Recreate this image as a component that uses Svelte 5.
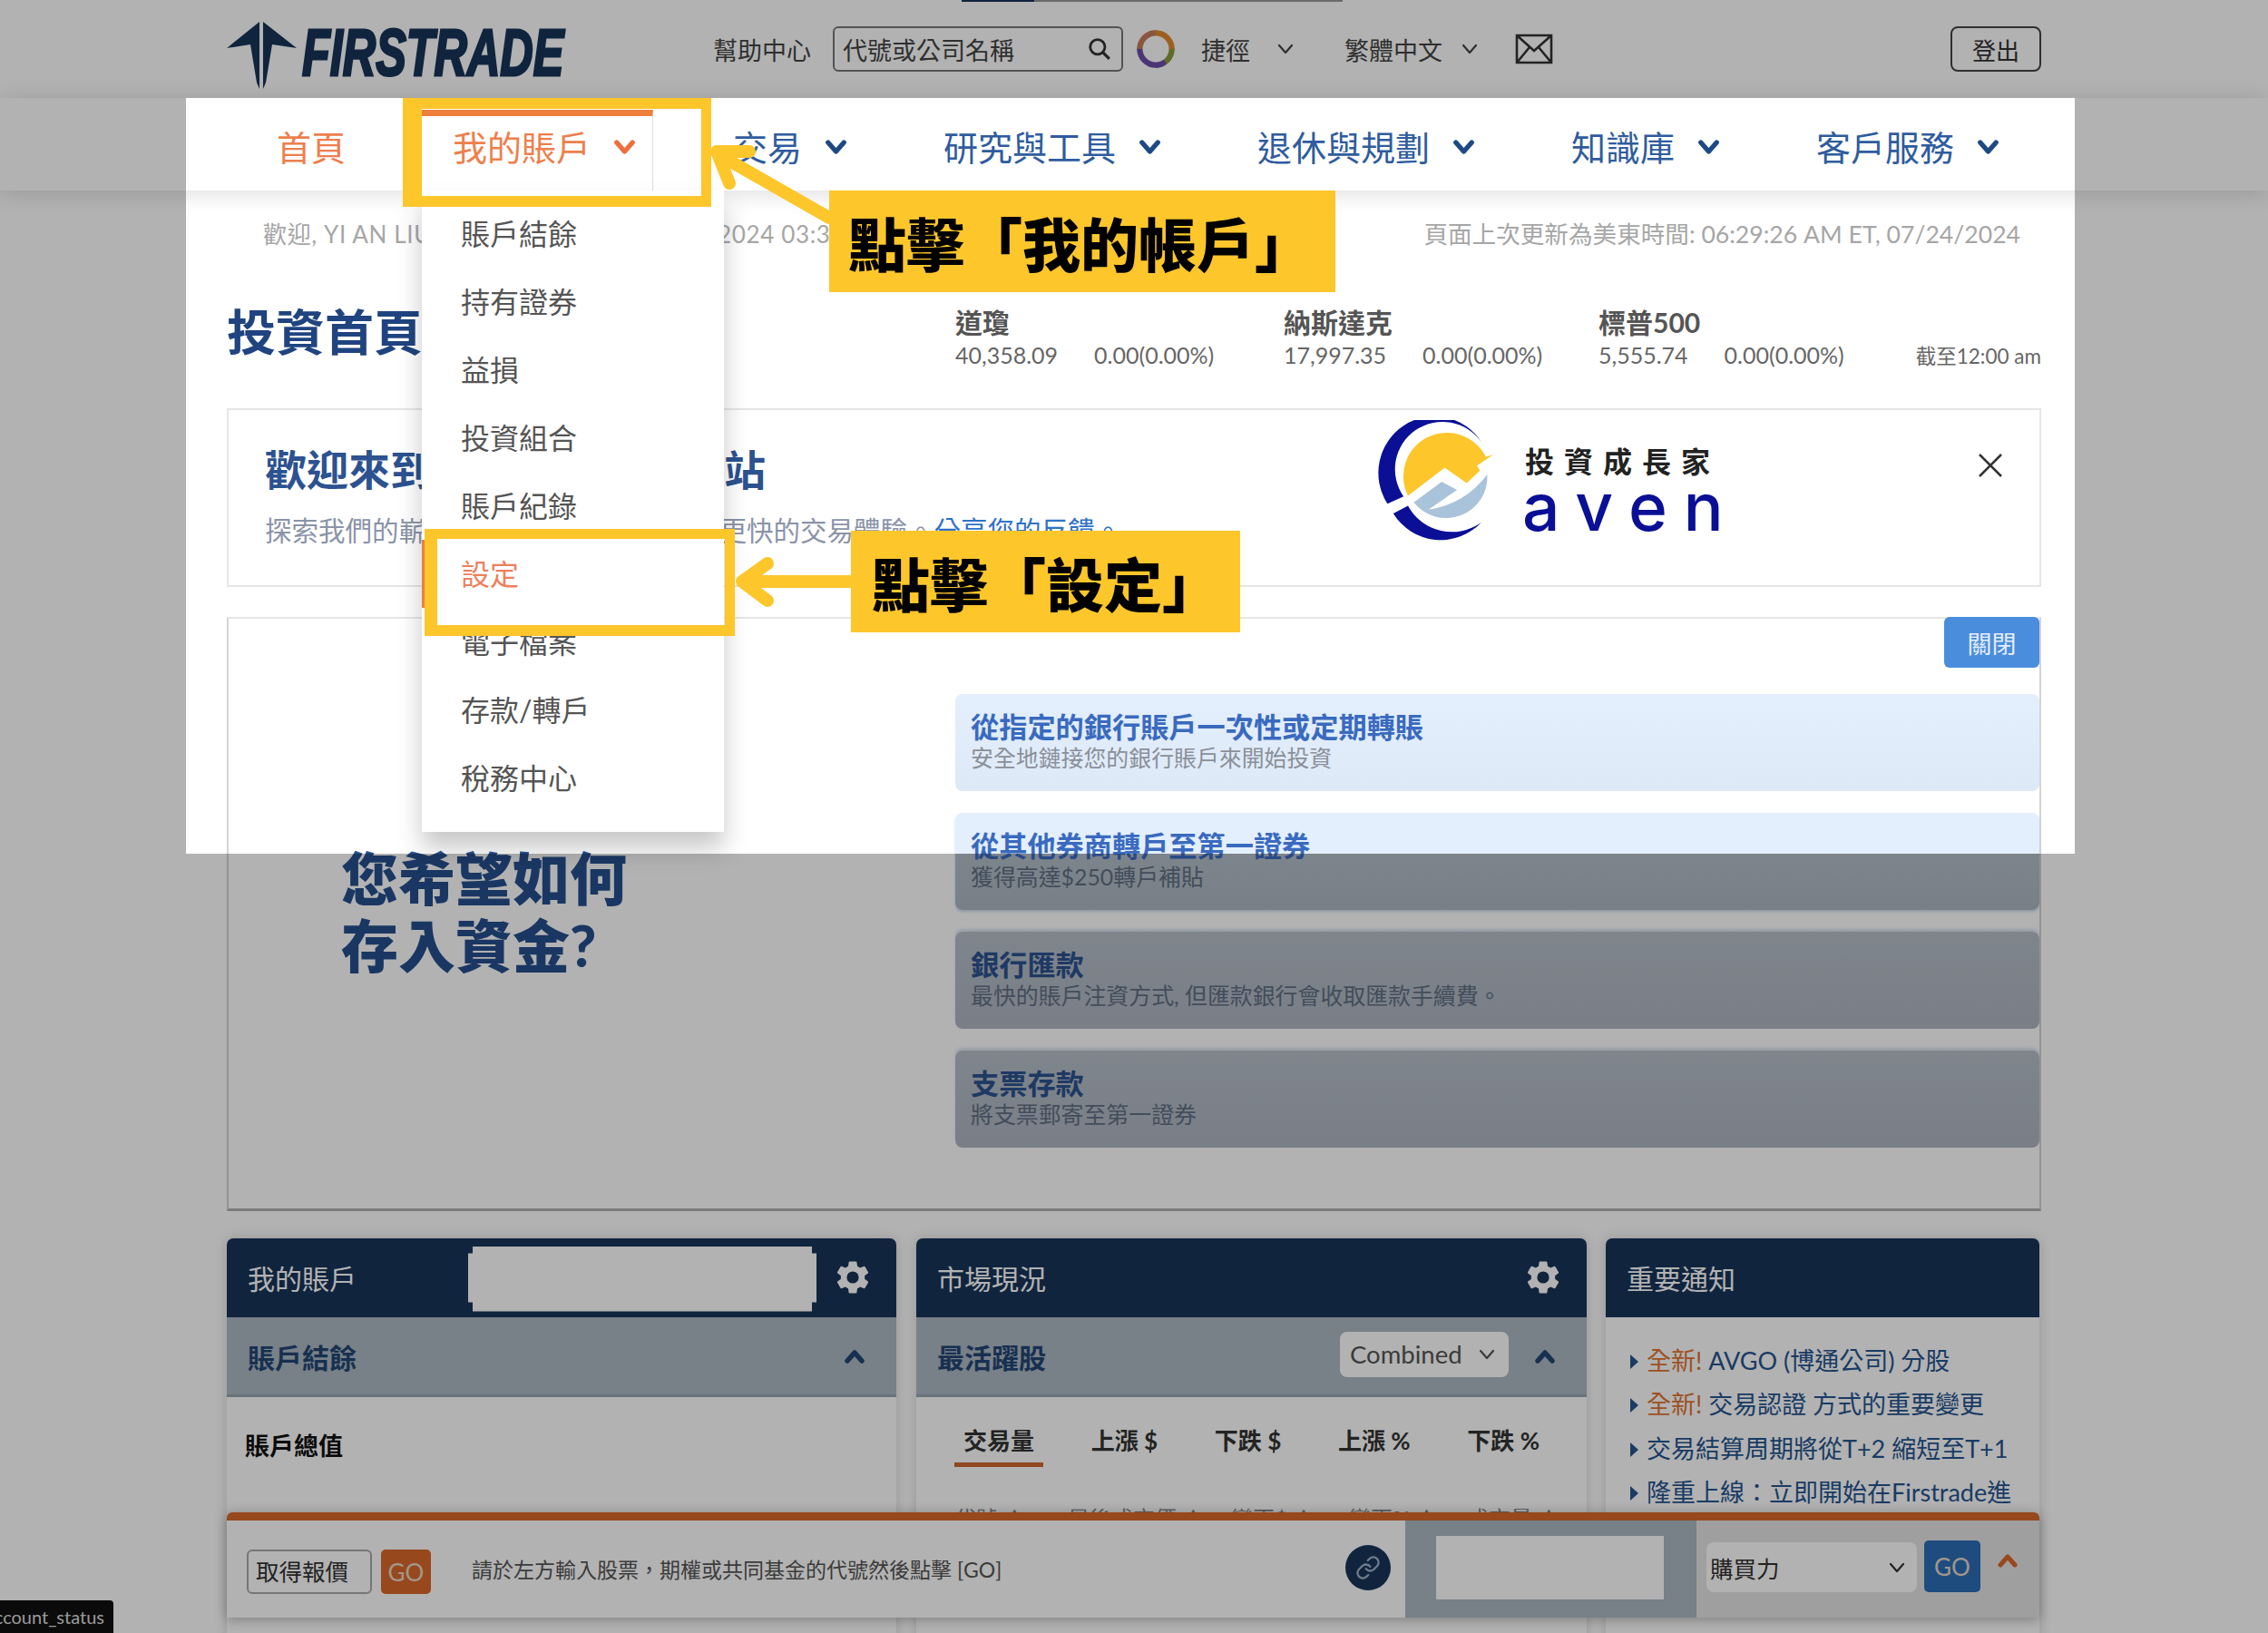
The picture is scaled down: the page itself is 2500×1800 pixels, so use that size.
<script>
  const navItems = [
    { label: '交易', gap: 88 },
    { label: '研究與工具', gap: 106 },
    { label: '退休與規劃', gap: 106 },
    { label: '知識庫', gap: 106 },
    { label: '客戶服務', gap: 106 }
  ];
  const menu = ['賬戶結餘', '持有證券', '益損', '投資組合', '賬戶紀錄', '設定', '電子檔案', '存款/轉戶', '稅務中心'];
  const indexes = [
    { name: '道瓊', value: '40,358.09', change: '0.00(0.00%)', width: 362 },
    { name: '納斯達克', value: '17,997.35', change: '0.00(0.00%)', width: 347 },
    { name: '標普500', value: '5,555.74', change: '0.00(0.00%)', width: 346 }
  ];
  const funding = [
    { title: '從指定的銀行賬戶一次性或定期轉賬', note: '安全地鏈接您的銀行賬戶來開始投資', cls: 'lit' },
    { title: '從其他券商轉戶至第一證券', note: '獲得高達$250轉戶補貼', cls: 'split' },
    { title: '銀行匯款', note: '最快的賬戶注資方式, 但匯款銀行會收取匯款手續費。', cls: 'dim' },
    { title: '支票存款', note: '將支票郵寄至第一證券', cls: 'dim' }
  ];
  const tabs = ['交易量', '上漲 $', '下跌 $', '上漲 %', '下跌 %'];
  const columns = [['代號', 125], ['最後成交價', 180], ['變更$', 130], ['變更%', 130], ['成交量', 100]];
  const notices = [
    { hot: '全新! ', text: 'AVGO (博通公司) 分股' },
    { hot: '全新! ', text: '交易認證 方式的重要變更' },
    { hot: '', text: '交易結算周期將從T+2 縮短至T+1' },
    { hot: '', text: '隆重上線：立即開始在Firstrade進' }
  ];
  const gear =
    'M19.14 12.94c.04-.3.06-.61.06-.94 0-.32-.02-.64-.07-.94l2.03-1.58a.49.49 0 0 0 .12-.61l-1.92-3.32a.488.488 0 0 0-.59-.22l-2.39.96c-.5-.38-1.03-.7-1.62-.94l-.36-2.54a.484.484 0 0 0-.48-.41h-3.84c-.24 0-.43.17-.47.41l-.36 2.54c-.59.24-1.13.57-1.62.94l-2.39-.96c-.22-.08-.47 0-.59.22L2.74 8.87c-.12.21-.08.47.12.61l2.03 1.58c-.05.3-.09.63-.09.94s.02.64.07.94l-2.03 1.58a.49.49 0 0 0-.12.61l1.92 3.32c.12.22.37.29.59.22l2.39-.96c.5.38 1.03.7 1.62.94l.36 2.54c.05.24.24.41.48.41h3.84c.24 0 .44-.17.47-.41l.36-2.54c.59-.24 1.13-.56 1.62-.94l2.39.96c.22.08.47 0 .59-.22l1.92-3.32c.12-.22.07-.47-.12-.61l-2.01-1.58zM12 15.6A3.6 3.6 0 1 1 12 8.4a3.6 3.6 0 0 1 0 7.2z';
</script>

{#snippet chevron(cls)}
  <svg class={cls} viewBox="0 0 20 14"><path d="M3 3l7 8 7-8" fill="none" stroke="currentColor" stroke-linecap="round" stroke-linejoin="round" /></svg>
{/snippet}

{#snippet caretUp()}
  <svg class="caret-up" viewBox="0 0 24 16"><path d="M4 13l8-9 8 9" fill="none" stroke="currentColor" stroke-width="5.5" stroke-linecap="round" stroke-linejoin="round" /></svg>
{/snippet}

{#snippet cog()}
  <svg class="cog" viewBox="0 0 24 24"><path d={gear} fill="#fff" fill-rule="evenodd" /></svg>
{/snippet}

<div class="page">
  <div class="tabstrip"></div>

  <header class="top">
    <div class="wrap top-row">
      <svg class="arrow-mark" viewBox="250 22 80 80">
        <path d="M286 25 L250 54 L276 50 L283 92 L286 99Z M290 25 L327 54 L300 50 L293 92 L290 99Z" fill="#17345a" />
      </svg>
      <div class="wordmark"><span>FIRSTRADE</span></div>
      <span class="help">幫助中心</span>
      <div class="search">
        <span>代號或公司名稱</span>
        <svg viewBox="0 0 24 24"><circle cx="10" cy="10" r="7.5" fill="none" stroke="#333" stroke-width="2.6" /><path d="M15.5 15.5L22 22" stroke="#333" stroke-width="3" /></svg>
      </div>
      <div class="ring"></div>
      <span class="quick">捷徑</span>
      {@render chevron('thin quick-chev')}
      <span class="lang">繁體中文</span>
      {@render chevron('thin lang-chev')}
      <svg class="mail" viewBox="0 0 42 34"><path d="M2 2h38v30H2zM2 2l19 17L40 2M2 32l14-17M40 32L26 15" fill="none" stroke="#333" stroke-width="2.6" /></svg>
      <button class="logout">登出</button>
    </div>
  </header>

  <nav class="nav">
    <div class="wrap nav-row">
      <a class="item home">首頁</a>
      <a class="item active">我的賬戶{@render chevron('bold')}</a>
      {#each navItems as n}
        <a class="item" style="margin-left:{n.gap}px">{n.label}{@render chevron('bold')}</a>
      {/each}
    </div>
  </nav>

  <main class="wrap">
    <div class="subbar">
      <span class="login">歡迎, YI AN LIU 您的上次登入時間 07/24/2024 03:30 AM</span>
      <span class="updated">頁面上次更新為美東時間: 06:29:26 AM ET, 07/24/2024</span>
    </div>

    <section class="summary">
      <h1>投資首頁</h1>
      {#each indexes as i}
        <div class="index" style="width:{i.width}px">
          <b>{i.name}</b>
          <div class="vals"><span>{i.value}</span><span>{i.change}</span></div>
        </div>
      {/each}
      <span class="asof">截至12:00 am</span>
    </section>

    <section class="welcome">
      <div class="welcome-text">
        <h2>歡迎來到第一證券全新網站</h2>
        <p>探索我們的嶄新網站設計與功能，享受更快的交易體驗。<a>分享您的反饋。</a></p>
      </div>
      <div class="brand">
        <svg viewBox="100 60 420 420">
          <path d="M455 135A190 192 0 0 0 135 345L190 320A158 158 0 0 1 455 135Z" fill="#0a0f96" />
          <path d="M155 378A190 192 0 0 0 455 408A170 170 0 0 1 205 352Z" fill="#0a0f96" />
          <path d="M205 318A135 135 0 0 1 470 185L495 178L440 215L450 232L405 275L330 222Z" fill="#fdc62b" />
          <path d="M225 340L320 270L372 298L275 365Q400 345 475 245A140 140 0 0 1 225 340Z" fill="#a9c3db" />
        </svg>
        <div class="brand-text">
          <b>投資成長家</b>
          <span>aven</span>
        </div>
      </div>
      <svg class="dismiss" viewBox="0 0 26 26"><path d="M1 1l24 24M25 1L1 25" stroke="#333" stroke-width="2.6" /></svg>
    </section>

    <section class="deposit">
      <div class="deposit-left">
        <h2>您希望如何<br />存入資金?</h2>
      </div>
      <div class="deposit-right">
        <button class="close">關閉</button>
        <div class="rows">
          {#each funding as f}
            <div class="row {f.cls}">
              <b>{f.title}</b>
              <span>{f.note}</span>
            </div>
          {/each}
        </div>
      </div>
    </section>

    <section class="panels">
      <div class="panel first">
        <div class="panel-head">
          <span>我的賬戶</span>
          <div class="redacted"></div>
          {@render cog()}
        </div>
        <div class="panel-sub">
          <b>賬戶結餘</b>
          {@render caretUp()}
        </div>
        <div class="panel-body"><b class="total">賬戶總值</b></div>
      </div>

      <div class="panel second">
        <div class="panel-head">
          <span>市場現況</span>
          {@render cog()}
        </div>
        <div class="panel-sub">
          <b>最活躍股</b>
          <div class="combined">Combined{@render chevron('thin')}</div>
          {@render caretUp()}
        </div>
        <div class="panel-body">
          <div class="tabs">
            {#each tabs as t, i}
              <span class:on={i === 0}>{t}</span>
            {/each}
          </div>
          <div class="cols">
            {#each columns as [c, w]}
              <span style="width:{w}px">{c} ▲</span>
            {/each}
          </div>
        </div>
      </div>

      <div class="panel third">
        <div class="panel-head"><span>重要通知</span></div>
        <ul>
          {#each notices as n}
            <li><em>{n.hot}</em>{n.text}</li>
          {/each}
        </ul>
      </div>
    </section>
  </main>

  <!-- ticket bar pinned over the bottom of the panels -->
  <div class="ticket">
    <div class="quote">取得報價</div>
    <button class="go orange">GO</button>
    <span class="hint">請於左方輸入股票，期權或共同基金的代號然後點擊 [GO]</span>
    <div class="linked">
      <svg viewBox="0 0 24 24" fill="none" stroke="#9fb2c8" stroke-width="2" stroke-linecap="round"><path d="M10 13a5 5 0 0 0 7.54.54l3-3a5 5 0 0 0-7.07-7.07l-1.72 1.71" /><path d="M14 11a5 5 0 0 0-7.54-.54l-3 3a5 5 0 0 0 7.07 7.07l1.71-1.71" /></svg>
    </div>
    <div class="ticket-mid"><div class="blank"></div></div>
    <div class="ticket-end">
      <div class="power"><span>購買力</span>{@render chevron('thin')}</div>
      <button class="go blue">GO</button>
      <svg class="expand" viewBox="0 0 24 16"><path d="M4 13l8-9 8 9" fill="none" stroke="#d9682a" stroke-width="5" stroke-linecap="round" stroke-linejoin="round" /></svg>
    </div>
  </div>

  <div class="status"><span>/account_status</span></div>

  <!-- dropdown stays under the dim layer so its shadow darkens past the spotlight -->
  <div class="menu">
    {#each menu as m, i}
      <div class="menu-item" class:current={i === 5}>{m}</div>
    {/each}
  </div>

  <div class="spot"></div>

  <div class="mark tab-mark"></div>
  <div class="mark set-mark"></div>
  <div class="label label-one">點擊「我的帳戶」</div>
  <div class="label label-two">點擊「設定」</div>
  <svg class="pointers" viewBox="0 0 2500 1800">
    <g fill="none" stroke="#fdc62b" stroke-width="14" stroke-linecap="round" stroke-linejoin="round">
      <path d="M914 240L795 172M826 167H790L804 202" />
      <path d="M938 641H822M846 621L818 641L846 662" />
    </g>
  </svg>
</div>

<style>
  :global(body) {
    margin: 0;
    background: #fff;
  }
  .page {
    position: relative;
    width: 2500px;
    height: 1800px;
    overflow: hidden;
    background: #fff;
    color: #555;
    font-family: Lato, "Noto Sans CJK TC", sans-serif;
  }
  .wrap {
    width: 2000px;
    margin: 0 auto;
  }
  .tabstrip {
    position: absolute;
    left: 1060px;
    top: 0;
    width: 420px;
    height: 2px;
    background: linear-gradient(90deg, #17345a 0 80px, #999 80px);
  }

  /* top bar */
  .top {
    height: 108px;
  }
  .top-row {
    display: flex;
    align-items: center;
    height: 108px;
    font-size: 27px;
    color: #444;
  }
  .arrow-mark {
    width: 80px;
    height: 80px;
    margin-top: 13px;
  }
  .wordmark {
    width: 292px;
    margin-left: 3px;
    height: 74px;
    margin-top: 8px;
  }
  .wordmark span {
    display: block;
    transform: scaleX(0.69);
    transform-origin: left center;
    font: italic 700 73px/74px "Liberation Sans", sans-serif;
    color: #17345a;
    -webkit-text-stroke: 3px #17345a;
    white-space: nowrap;
  }
  .help {
    margin-left: 161px;
  }
  .search {
    display: flex;
    align-items: center;
    justify-content: space-between;
    box-sizing: border-box;
    width: 320px;
    height: 50px;
    margin-left: 24px;
    padding: 0 11px 0 9px;
    border: 2px solid #777;
    border-radius: 6px;
  }
  .search svg {
    width: 26px;
    height: 26px;
  }
  .ring {
    width: 42px;
    height: 42px;
    margin-left: 15px;
    border-radius: 50%;
    background: conic-gradient(#e08a2c 0 25%, #8d9a3a 25% 40%, #6a4ea8 40% 75%, #c47a5a 75%);
    -webkit-mask: radial-gradient(circle, transparent 14px, #000 15px);
    mask: radial-gradient(circle, transparent 14px, #000 15px);
  }
  .quick {
    margin-left: 29px;
  }
  .lang {
    margin-left: 55px;
  }
  .thin {
    width: 20px;
    height: 14px;
    stroke-width: 2.2;
  }
  :global(.quick-chev) {
    margin-left: 29px;
  }
  :global(.lang-chev) {
    margin-left: 20px;
  }
  .mail {
    width: 42px;
    height: 34px;
    margin-left: 40px;
  }
  .logout {
    margin-left: auto;
    width: 100px;
    height: 50px;
    border: 2px solid #444;
    border-radius: 8px;
    background: transparent;
    color: #333;
    font: inherit;
    font-size: 26px;
  }

  /* main nav */
  .nav {
    height: 102px;
    background: #fff;
    box-shadow: 0 3px 24px rgba(0, 0, 0, 0.14);
    position: relative;
  }
  .nav-row {
    display: flex;
    padding-top: 13px;
  }
  .item {
    display: flex;
    align-items: center;
    box-sizing: border-box;
    height: 89px;
    padding-bottom: 14px;
    border-top: 7px solid transparent;
    font-size: 38px;
    line-height: 46px;
    color: #2f5c9e;
  }
  .item :global(svg) {
    width: 25px;
    height: 18px;
    margin-left: 25px;
  }
  .bold {
    stroke-width: 4.2;
    color: #1d4a85;
  }
  .home {
    margin-left: 55px;
    color: #ee7f4d;
  }
  .active {
    margin-left: 83px;
    width: 256px;
    padding-left: 35px;
    border-top-color: #ee7f3d;
    border-right: 1px solid #ddd;
    color: #ee7f4d;
  }
  .active .bold {
    color: #ee6f3d;
  }

  .subbar {
    display: flex;
    justify-content: space-between;
    padding: 34px 23px 0 40px;
    font-size: 26px;
    line-height: 28px;
    color: #a6a6a6;
    white-space: nowrap;
  }
  .login {
    letter-spacing: 0.63px;
  }
  .updated {
    font-size: 26.6px;
  }

  .summary {
    display: flex;
    margin-top: 62px;
    height: 75px;
  }
  .summary h1 {
    width: 803px;
    margin: 0;
    font-size: 54px;
    line-height: 66px;
    font-weight: 700;
    color: #1f4480;
  }
  .index {
    padding-top: 3px;
  }
  .index b {
    display: block;
    font-size: 30px;
    line-height: 36px;
    color: #555;
  }
  .vals {
    display: flex;
    gap: 40px;
    font-size: 25px;
    line-height: 36px;
    color: #666;
  }
  .asof {
    margin-left: auto;
    align-self: flex-end;
    margin-bottom: -2px;
    font-size: 22.5px;
    line-height: 36px;
    color: #666;
  }

  /* welcome card */
  .welcome {
    display: flex;
    box-sizing: border-box;
    height: 197px;
    margin-top: 41px;
    border: 2px solid #e6e6e6;
  }
  .welcome-text {
    box-sizing: border-box;
    width: 1266px;
    padding: 40px 0 0 40px;
    white-space: nowrap;
  }
  .welcome-text h2 {
    margin: 0;
    font-size: 46px;
    line-height: 52px;
    font-weight: 700;
    color: #2c5290;
  }
  .welcome-text p {
    margin: 23px 0 0;
    font-size: 29.5px;
    line-height: 36px;
    color: #8a93a8;
  }
  .welcome-text a {
    color: #2f72c4;
  }
  .brand {
    display: flex;
    margin-top: 11px;
  }
  .brand svg {
    width: 136px;
    height: 136px;
  }
  .brand-text {
    display: flex;
    flex-direction: column;
    align-items: flex-start;
    margin-left: 27px;
    padding-top: 26px;
  }
  .brand-text b {
    font-size: 32px;
    line-height: 40px;
    letter-spacing: 11px;
    color: #222;
  }
  .brand-text span {
    font: 500 73px/56px Inter, sans-serif;
    letter-spacing: 18px;
    color: #0a0f96;
    margin-top: 2px;
    margin-left: -3px;
  }
  .dismiss {
    width: 26px;
    height: 26px;
    margin: 48px 41px 0 auto;
  }

  /* funding options */
  .deposit {
    display: flex;
    box-sizing: border-box;
    height: 655px;
    margin-top: 33px;
    border: 2px solid #d4d4d4;
    border-top-color: #e6e6e6;
    border-bottom-color: #b0b0b0;
    border-bottom-width: 3px;
  }
  .deposit-left {
    width: 803px;
    padding: 249px 0 0 124px;
    box-sizing: border-box;
  }
  .deposit-left h2 {
    margin: 0;
    font-size: 63px;
    line-height: 74px;
    font-weight: 900;
    color: #26508f;
  }
  .deposit-right {
    display: flex;
    flex-direction: column;
    width: 1195px;
    margin-left: -2px;
  }
  .close {
    align-self: flex-end;
    width: 105px;
    height: 56px;
    margin-top: -2px;
    border: 0;
    border-radius: 6px;
    background: #4a8ddc;
    color: #e6eefa;
    font: inherit;
    font-size: 27px;
  }
  .rows {
    display: flex;
    flex-direction: column;
    gap: 24px;
    margin-top: 29px;
  }
  .row {
    display: flex;
    flex-direction: column;
    box-sizing: border-box;
    height: 107px;
    padding: 18px 17px 0;
    border-radius: 8px;
    white-space: nowrap;
  }
  .row b {
    font-size: 31.2px;
    line-height: 36px;
    color: #3a6abf;
  }
  .row span {
    font-size: 24.9px;
    line-height: 32px;
    color: #606f83;
  }
  .lit {
    background: linear-gradient(#e3effc, #dde9f7);
  }
  .lit span {
    color: #8b8f98;
  }
  /* this row crosses the edge of the spotlight */
  .split {
    background: linear-gradient(#e3effc 45px, #b3bec9 45px, #adb7c2);
    box-shadow: 0 2px 3px rgba(170, 195, 225, 0.6);
  }
  .dim {
    background: linear-gradient(#b6bfc8, #aeb5c2);
    box-shadow: 0 -3px 3px rgba(190, 210, 235, 0.6);
  }
  .dim b {
    color: #2c528f;
  }

  /* lower panels */
  .panels {
    display: flex;
    margin-top: 30px;
  }
  .panel {
    flex: none;
    height: 500px;
    background: #fff;
    border-radius: 7px 7px 0 0;
    box-shadow: 0 0 14px rgba(0, 0, 0, 0.16);
  }
  .first {
    width: 738px;
  }
  .second {
    width: 739px;
    margin-left: 22px;
  }
  .third {
    width: 478px;
    margin-left: 21px;
  }
  .panel-head {
    display: flex;
    align-items: center;
    box-sizing: border-box;
    height: 87px;
    padding: 0 29px 2px 23px;
    border-radius: 7px 7px 0 0;
    background: #17345a;
    color: #fff;
    font-size: 30px;
  }
  .redacted {
    width: 384px;
    height: 72px;
    margin: 4px 0 0 123px;
    background: #fff;
    clip-path: polygon(5px 0, 379px 0, 379px 8px, 384px 8px, 384px 62px, 379px 62px, 379px 72px, 5px 72px, 5px 62px, 0 62px, 0 8px, 5px 8px);
  }
  .cog {
    width: 44px;
    height: 44px;
    margin-left: auto;
  }
  .first .cog {
    margin-right: -3px;
  }
  .second .cog {
    margin-right: -3px;
  }
  .panel-sub {
    display: flex;
    align-items: center;
    box-sizing: border-box;
    height: 88px;
    padding: 0 34px 0 23px;
    background: #acb8c3;
    border-bottom: 3px solid #9aa5af;
    font-size: 30px;
    color: #234673;
  }
  .caret-up {
    width: 24px;
    height: 16px;
    margin-left: auto;
    color: #234673;
  }
  .combined {
    display: flex;
    align-items: center;
    justify-content: space-between;
    box-sizing: border-box;
    width: 186px;
    height: 50px;
    margin: -4px 28px 0 auto;
    padding: 0 14px 0 11px;
    border-radius: 8px;
    background: #fff;
    color: #555;
    font-size: 27.5px;
    font-weight: 400;
  }
  .combined + .caret-up {
    margin-left: 0;
  }
  .total {
    display: block;
    padding: 35px 0 0 20px;
    font-size: 27px;
    line-height: 38px;
    color: #111;
  }
  .tabs {
    display: flex;
    justify-content: space-between;
    box-sizing: border-box;
    padding: 30px 42px 0 42px;
    font-size: 26px;
    line-height: 36px;
    font-weight: 700;
    color: #333;
  }
  .tabs span {
    padding: 0 10px 6px;
    border-bottom: 5px solid transparent;
  }
  .tabs .on {
    border-bottom-color: #d0662f;
  }
  .cols {
    display: flex;
    margin: 42px 0 0 42px;
    font-size: 24px;
    line-height: 30px;
    color: #888;
    white-space: nowrap;
  }
  .third ul {
    margin: 0;
    padding: 24px 0 0 45px;
    list-style: none;
    font-size: 27px;
    line-height: 48.3px;
    color: #265590;
    white-space: nowrap;
    overflow: hidden;
    height: 200px;
  }
  .third li {
    position: relative;
  }
  .third li::before {
    content: '';
    position: absolute;
    left: -18px;
    top: 17px;
    border-left: 9px solid #265590;
    border-top: 8px solid transparent;
    border-bottom: 8px solid transparent;
  }
  .third em {
    font-style: normal;
    color: #e0732f;
  }

  /* ticket bar */
  .ticket {
    position: absolute;
    z-index: 3;
    left: 250px;
    top: 1667px;
    display: flex;
    align-items: stretch;
    box-sizing: border-box;
    width: 1998px;
    height: 116px;
    border-top: 9px solid #d9682a;
    border-radius: 6px 6px 0 0;
    background: #fff;
    box-shadow: 0 2px 14px rgba(0, 0, 0, 0.3);
    font-size: 26px;
    color: #444;
  }
  .quote {
    box-sizing: border-box;
    width: 138px;
    height: 49px;
    margin: 32px 0 0 22px;
    border: 2px solid #aaa;
    border-radius: 6px;
    padding-left: 8px;
    font-size: 25.5px;
    line-height: 45px;
    color: #333;
  }
  .go {
    border: 0;
    border-radius: 5px;
    font: inherit;
    font-size: 26px;
    color: #e9d9c8;
  }
  .orange {
    width: 55px;
    height: 49px;
    margin: 32px 0 0 10px;
    background: #d9682a;
  }
  .hint {
    width: 990px;
    margin: 31px 0 0 45px;
    font-size: 23px;
    line-height: 46px;
    color: #555;
    white-space: nowrap;
  }
  .linked {
    display: flex;
    align-items: center;
    justify-content: center;
    width: 50px;
    height: 50px;
    margin: 27px 0 0 -27px;
    border-radius: 50%;
    background: #17345a;
  }
  .linked svg {
    width: 28px;
    height: 28px;
  }
  .ticket-mid {
    width: 321px;
    margin-left: 16px;
    padding: 17px 0 0 34px;
    box-sizing: border-box;
    background: #acb8c3;
  }
  .blank {
    width: 251px;
    height: 70px;
    background: #fff;
  }
  .ticket-end {
    display: flex;
    flex: 1;
    background: #e4e4e4;
    padding: 24px 0 0 11px;
  }
  .power {
    display: flex;
    align-items: center;
    justify-content: space-between;
    box-sizing: border-box;
    width: 232px;
    height: 55px;
    padding: 0 12px 0 4px;
    border-radius: 8px;
    background: #fff;
    font-size: 25.5px;
    color: #333;
  }
  .blue {
    width: 62px;
    height: 57px;
    margin: -2px 0 0 8px;
    background: #2b6eb7;
  }
  .expand {
    width: 24px;
    height: 16px;
    margin: 12px 0 0 18px;
  }

  .status {
    position: absolute;
    z-index: 3;
    left: 0;
    bottom: 0;
    width: 125px;
    height: 36px;
    overflow: hidden;
    direction: rtl;
    background: #111;
    border-radius: 0 4px 0 0;
    color: #ddd;
    font: 20px/36px Lato, sans-serif;
    white-space: nowrap;
  }
  .status span {
    display: inline-block;
    direction: ltr;
    padding-right: 10px;
  }

  /* open dropdown */
  .menu {
    position: absolute;
    z-index: 2;
    left: 465px;
    top: 210px;
    width: 333px;
    height: 707px;
    box-sizing: border-box;
    padding-top: 10px;
    background: #fff;
    box-shadow: 0 18px 26px rgba(0, 0, 0, 0.22);
  }
  .menu-item {
    height: 75px;
    padding-left: 43px;
    font-size: 32px;
    line-height: 75px;
    color: #555;
  }
  .current {
    color: #ee7f5c;
    box-shadow: inset 4px 0 #ee7f3d;
  }

  /* dim layer with the spotlight cut out */
  .spot {
    position: absolute;
    z-index: 5;
    left: 205px;
    top: 108px;
    width: 2082px;
    height: 833px;
    box-shadow: 0 0 0 3000px rgba(0, 0, 0, 0.3);
    pointer-events: none;
  }
  .mark {
    position: absolute;
    z-index: 6;
    box-sizing: border-box;
    border-style: solid;
    border-color: #fdc62b;
  }
  .tab-mark {
    left: 444px;
    top: 108px;
    width: 340px;
    height: 120px;
    border-width: 12px 11px 12px 21px;
  }
  .set-mark {
    left: 468px;
    top: 583px;
    width: 342px;
    height: 118px;
    border-width: 11px 11px 12px 14px;
  }
  .label {
    position: absolute;
    z-index: 6;
    display: flex;
    align-items: center;
    box-sizing: border-box;
    background: #fdc62b;
    color: #000;
    font-size: 64px;
    font-weight: 900;
    white-space: nowrap;
  }
  .label-one {
    left: 914px;
    top: 210px;
    width: 558px;
    height: 112px;
    padding-left: 21px;
  }
  .label-two {
    left: 938px;
    top: 585px;
    width: 429px;
    height: 112px;
    padding-left: 23px;
  }
  .pointers {
    position: absolute;
    z-index: 6;
    left: 0;
    top: 0;
    width: 2500px;
    height: 1800px;
    pointer-events: none;
  }
</style>
